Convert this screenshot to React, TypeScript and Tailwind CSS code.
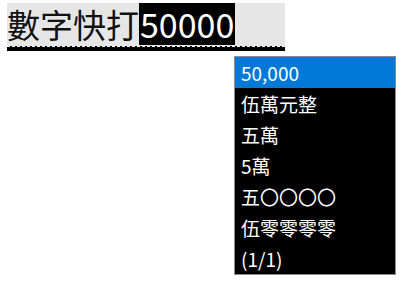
import React from "react";

const items = ["伍萬元整", "五萬", "5萬", "五〇〇〇〇", "伍零零零零", "(1/1)"];

const App: React.FC = () => {
  return (
    <div
      className="w-[412px] h-[283px] bg-white pt-[3px] pl-[7px]"
      style={{ fontFamily: '"Noto Sans CJK TC", "Noto Sans", sans-serif' }}
    >
      <div className="w-[278px]">
        <div className="flex h-[42px] items-center bg-[#e6e6e6] text-[33px] leading-none text-[#111]">
          <span className="flex h-full items-center">數字快打</span>
          <span className="flex h-full items-center bg-black px-[1px] text-[34px] text-white">50000</span>
        </div>
        <div className="h-[1px] bg-[#e6e6e6]" />
        <div className="h-[5px] border-t border-dashed border-white bg-black" />
      </div>
      <div className="ml-[227px] mt-[5px] w-[162px] border border-[#8c8c8c] bg-black text-[19px] leading-none text-white">
        <div className="flex h-[31px] items-center bg-[#0078d7] pl-[6px]">50,000</div>
        {items.map((t) => (
          <div key={t} className="flex h-[31px] items-center pl-[6px]">
            {t}
          </div>
        ))}
      </div>
    </div>
  );
};

export default App;
